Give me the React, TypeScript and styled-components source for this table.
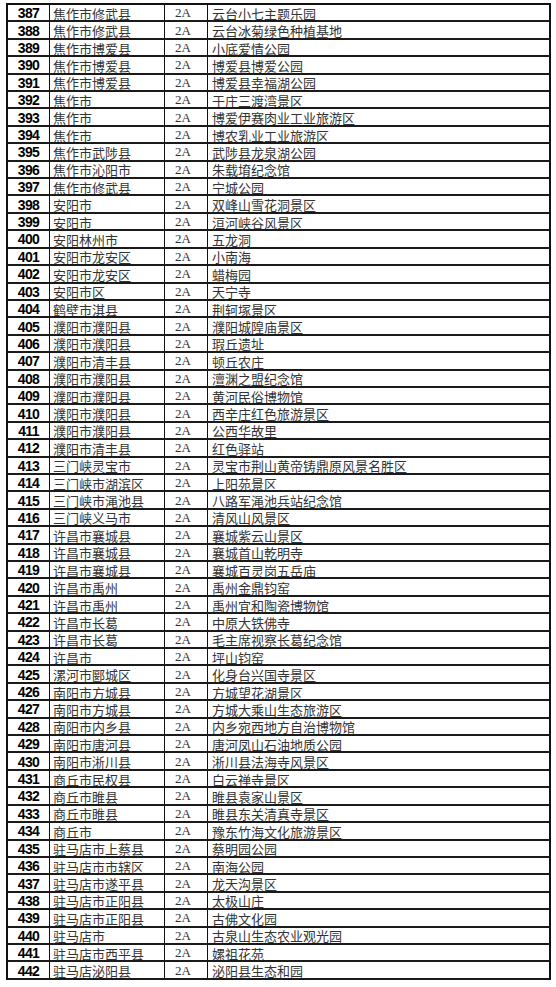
import React from "react";
import styled, { createGlobalStyle } from "styled-components";

const GlobalStyle = createGlobalStyle`
  html, body {
    margin: 0;
    padding: 0;
    background: #ffffff;
  }
`;

const rows: [number, string, string, string][] = [
  [387, "焦作市修武县", "2A", "云台小七主题乐园"],
  [388, "焦作市修武县", "2A", "云台冰菊绿色种植基地"],
  [389, "焦作市博爱县", "2A", "小底爱情公园"],
  [390, "焦作市博爱县", "2A", "博爱县博爱公园"],
  [391, "焦作市博爱县", "2A", "博爱县幸福湖公园"],
  [392, "焦作市", "2A", "于庄三渡湾景区"],
  [393, "焦作市", "2A", "博爱伊赛肉业工业旅游区"],
  [394, "焦作市", "2A", "博农乳业工业旅游区"],
  [395, "焦作市武陟县", "2A", "武陟县龙泉湖公园"],
  [396, "焦作市沁阳市", "2A", "朱载堉纪念馆"],
  [397, "焦作市修武县", "2A", "宁城公园"],
  [398, "安阳市", "2A", "双峰山雪花洞景区"],
  [399, "安阳市", "2A", "洹河峡谷风景区"],
  [400, "安阳林州市", "2A", "五龙洞"],
  [401, "安阳市龙安区", "2A", "小南海"],
  [402, "安阳市龙安区", "2A", "蜡梅园"],
  [403, "安阳市区", "2A", "天宁寺"],
  [404, "鹤壁市淇县", "2A", "荆轲塚景区"],
  [405, "濮阳市濮阳县", "2A", "濮阳城隍庙景区"],
  [406, "濮阳市濮阳县", "2A", "瑕丘遗址"],
  [407, "濮阳市清丰县", "2A", "顿丘农庄"],
  [408, "濮阳市濮阳县", "2A", "澶渊之盟纪念馆"],
  [409, "濮阳市濮阳县", "2A", "黄河民俗博物馆"],
  [410, "濮阳市濮阳县", "2A", "西辛庄红色旅游景区"],
  [411, "濮阳市濮阳县", "2A", "公西华故里"],
  [412, "濮阳市清丰县", "2A", "红色驿站"],
  [413, "三门峡灵宝市", "2A", "灵宝市荆山黄帝铸鼎原风景名胜区"],
  [414, "三门峡市湖滨区", "2A", "上阳苑景区"],
  [415, "三门峡市渑池县", "2A", "八路军渑池兵站纪念馆"],
  [416, "三门峡义马市", "2A", "清风山风景区"],
  [417, "许昌市襄城县", "2A", "襄城紫云山景区"],
  [418, "许昌市襄城县", "2A", "襄城首山乾明寺"],
  [419, "许昌市襄城县", "2A", "襄城百灵岗五岳庙"],
  [420, "许昌市禹州", "2A", "禹州金鼎钧窑"],
  [421, "许昌市禹州", "2A", "禹州宜和陶瓷博物馆"],
  [422, "许昌市长葛", "2A", "中原大铁佛寺"],
  [423, "许昌市长葛", "2A", "毛主席视察长葛纪念馆"],
  [424, "许昌市", "2A", "坪山钧窑"],
  [425, "漯河市郾城区", "2A", "化身台兴国寺景区"],
  [426, "南阳市方城县", "2A", "方城望花湖景区"],
  [427, "南阳市方城县", "2A", "方城大乘山生态旅游区"],
  [428, "南阳市内乡县", "2A", "内乡宛西地方自治博物馆"],
  [429, "南阳市唐河县", "2A", "唐河凤山石油地质公园"],
  [430, "南阳市淅川县", "2A", "淅川县法海寺风景区"],
  [431, "商丘市民权县", "2A", "白云禅寺景区"],
  [432, "商丘市睢县", "2A", "睢县袁家山景区"],
  [433, "商丘市睢县", "2A", "睢县东关清真寺景区"],
  [434, "商丘市", "2A", "豫东竹海文化旅游景区"],
  [435, "驻马店市上蔡县", "2A", "蔡明园公园"],
  [436, "驻马店市市辖区", "2A", "南海公园"],
  [437, "驻马店市遂平县", "2A", "龙天沟景区"],
  [438, "驻马店市正阳县", "2A", "太极山庄"],
  [439, "驻马店市正阳县", "2A", "古佛文化园"],
  [440, "驻马店市", "2A", "古泉山生态农业观光园"],
  [441, "驻马店市西平县", "2A", "嫘祖花苑"],
  [442, "驻马店泌阳县", "2A", "泌阳县生态和园"],
];

const Page = styled.div`
  padding: 3px 0 0 6px;
`;

const Table = styled.div`
  width: 545px;
  box-sizing: border-box;
  border-top: 2px solid #111;
  border-left: 2px solid #111;
  border-right: 2px solid #111;
`;

const Row = styled.div`
  display: grid;
  grid-template-columns: 42px 115px 43px 341px;
  height: 17.41px;
  box-sizing: border-box;
  border-bottom: 2px solid #1a1a1a;
`;

const Cell = styled.div<{ $last?: boolean }>`
  display: flex;
  align-items: center;
  overflow: hidden;
  white-space: nowrap;
  box-sizing: border-box;
  border-right: ${(p) => (p.$last ? "none" : "1px solid #111")};
`;

const NumCell = styled(Cell)`
  justify-content: center;
  padding-top: 1px;
  font-family: "Liberation Sans", Arial, sans-serif;
  font-weight: 700;
  font-size: 14px;
  letter-spacing: -0.7px;
  color: #000;
`;

const TextCell = styled(Cell)<{ $pad: number }>`
  padding-left: ${(p) => p.$pad}px;
  padding-top: 1px;
  font-family: "Liberation Serif", "Noto Sans CJK SC", serif;
  font-weight: 400;
  font-size: 13px;
  color: #333;
`;

const LevelCell = styled(Cell)`
  padding-left: 10px;
  padding-top: 1px;
  font-family: "Liberation Serif", "Times New Roman", serif;
  font-size: 13px;
  color: #333;
`;

export default function App() {
  return (
    <Page>
      <GlobalStyle />
      <Table>
        {rows.map(([n, area, level, name]) => (
          <Row key={n}>
            <NumCell>{n}</NumCell>
            <TextCell $pad={3}>{area}</TextCell>
            <LevelCell>{level}</LevelCell>
            <TextCell $pad={4} $last>
              {name}
            </TextCell>
          </Row>
        ))}
      </Table>
    </Page>
  );
}
